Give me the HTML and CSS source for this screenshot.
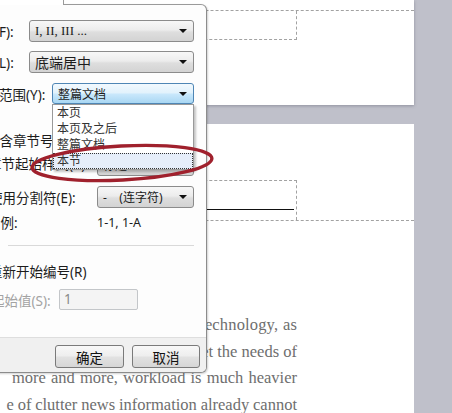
FILE: index.html
```html
<!DOCTYPE html>
<html lang="zh-CN">
<head>
<meta charset="utf-8">
<title>页码格式</title>
<link rel="stylesheet" href="styles.css">
</head>
<body>
<div class="screen">
  <div class="workspace">
    <div class="page page1">
      <div class="footer-area">
        <div class="footer-tab"></div>
      </div>
    </div>
    <div class="page page2">
      <div class="header-area">
        <div class="header-tab"><div class="header-rule"></div></div>
      </div>
      <div class="body-text">
        <div class="ln ln1">information technology, as</div>
        <div class="ln">meet the needs of</div>
        <div class="ln ln3">more and more, workload is much heavier</div>
        <div class="ln ln4">e of clutter news information already cannot</div>
      </div>
    </div>
  </div>

  <div class="dialog">
    <div class="row r1 in8"><span class="lbl">样式(F):</span><div class="combo w164"><span class="val serif">I, II, III ...</span><i class="arrow"></i></div></div>
    <div class="row r2 in8"><span class="lbl">位置(L):</span><div class="combo w164"><span class="val big">底端居中</span><i class="arrow"></i></div></div>
    <div class="row r3 in12"><span class="lbl">应用范围(Y):</span><div class="combo focus w141"><span class="val">整篇文档</span><i class="arrow"></i></div></div>
    <div class="row r4 in26"><span class="lbl">包含章节号(N)</span></div>
    <div class="row r5 in28"><span class="lbl up">章节起始样式(P):</span><div class="combo w96"><span class="val">标题 1</span><i class="arrow"></i></div></div>
    <div class="row r6 in29"><span class="lbl">使用分割符(E):</span><div class="combo w96"><span class="val pre">-    (连字符)</span><i class="arrow"></i></div></div>
    <div class="row r7 in27"><span class="lbl">示例:</span><span class="sample">1-1, 1-A</span></div>
    <div class="sep"></div>
    <div class="row r8 in29"><span class="lbl">重新开始编号(R)</span></div>
    <div class="row r9 in31"><span class="lbl dis w68">起始值(S):</span><div class="input">1</div></div>
    <div class="buttons"><button class="btn ok">确定</button><button class="btn cancel">取消</button></div>
  </div>

  <ul class="dropdown">
    <li>本页</li>
    <li>本页及之后</li>
    <li>整篇文档</li>
    <li class="sel">本节</li>
  </ul>

  <svg class="annot" width="232" height="70" viewBox="0 0 232 70">
    <ellipse cx="122" cy="33" rx="90" ry="17" transform="rotate(-3 122 33)" fill="none" stroke="#a0212d" stroke-width="3.4"/>
  </svg>
</div>
</body>
</html>
```

FILE: styles.css
```css
html, body {
  margin: 0;
  padding: 0;
}
body {
  width: 452px;
  height: 413px;
  overflow: hidden;
}
.screen {
  position: relative;
  width: 452px;
  height: 413px;
  overflow: hidden;
  background: #bfc0ca;
}
.workspace {
  display: flex;
  flex-direction: column;
  width: 452px;
  height: 413px;
}
.page {
  width: 414px;
  background: #fff;
}
.page1 {
  height: 105px;
  flex: none;
  box-shadow: 0 1px 3px rgba(60, 60, 80, 0.35);
  padding-top: 10px;
  box-sizing: border-box;
}
.page2 {
  margin-top: 19px;
  flex: 1;
}
.footer-area {
  border-top: 1px dashed #a2a2a2;
}
.footer-tab {
  width: 297px;
  height: 29px;
  box-sizing: border-box;
  border-right: 1px dashed #a2a2a2;
  border-bottom: 1px dashed #a2a2a2;
}
.header-area {
  padding-top: 56px;
  border-bottom: 1px dashed #a2a2a2;
}
.header-tab {
  width: 297px;
  height: 40px;
  box-sizing: border-box;
  border-top: 1px dashed #a2a2a2;
  border-right: 1px dashed #a2a2a2;
  padding-top: 28px;
}
.header-rule {
  width: 294px;
  height: 1px;
  background: #111;
}
.body-text {
  margin-top: 91px;
  width: 297px;
  font-family: "Liberation Serif", serif;
  font-size: 16.5px;
  line-height: 26.7px;
  color: #6e6e6e;
}
.ln {
  text-align: right;
  white-space: nowrap;
}
.ln1 { word-spacing: 0.5px; letter-spacing: 0.15px; }
.ln3 { word-spacing: 1px; }
.ln4 { word-spacing: -0.3px; }

/* dialog */
.dialog {
  position: absolute;
  left: -40px;
  top: 4px;
  width: 247px;
  height: 369px;
  box-sizing: border-box;
  background: #fdfdfd;
  border-top: 1px solid #9a9a9a;
  border-right: 1px solid #8c8c8c;
  border-bottom: 1px solid #8c8c8c;
  border-radius: 0 6px 6px 0;
  box-shadow: 1px 1px 2px rgba(0, 0, 0, 0.18);
  display: flex;
  flex-direction: column;
  font-family: "Noto Sans", "Noto Sans CJK SC", sans-serif;
  font-size: 13.5px;
  color: #1c1c1c;
}
.dialog::before {
  content: "";
  position: absolute;
  left: 0;
  top: -5px;
  width: 103px;
  height: 5px;
  background: #fff;
  border-right: 1px solid #9a9a9a;
}
.row {
  display: flex;
  align-items: center;
  height: 22px;
  padding-left: 15px;
  padding-right: 12px;
  flex: none;
  white-space: nowrap;
}
.r1 { margin-top: 15px; }
.r2 { margin-top: 9px; }
.r3 { margin-top: 10px; height: 21px; }
.r4 { margin-top: 25px; }
.r5 { margin-top: 3px; }
.r6 { margin-top: 10px; }
.r7 { margin-top: 3px; }
.r8 { margin-top: 14px; }
.r9 { margin-top: 7px; height: 21px; }
.in8 { padding-left: 8px; }
.in12 { padding-left: 12px; }
.in26 { padding-left: 26px; }
.in27 { padding-left: 27px; }
.in28 { padding-left: 28px; }
.in29 { padding-left: 29px; }
.in31 { padding-left: 31px; }
.lbl { flex: none; }
.up { margin-bottom: 4px; }
.dis { color: #a3a3a3; }
.w68 { width: 68px; }
.combo {
  margin-left: auto;
  height: 100%;
  box-sizing: border-box;
  display: flex;
  align-items: center;
  padding-left: 5px;
  border: 1px solid #8b8b8b;
  border-radius: 3px;
  background: linear-gradient(#f7f7f7, #ececec 45%, #dedede 55%, #d3d3d3);
  font-size: 12px;
}
.combo.focus {
  border-color: #4f86b5;
  background: linear-gradient(#f2f9fe, #e2f2fc 45%, #c8e7fb 55%, #a9d7f3);
  font-size: 12px;
}
.w164 { width: 165px; }
.w141 { width: 142px; }
.w96 { width: 97px; }
.val { flex: none; }
.big { font-size: 14px; }
.serif {
  font-family: "Liberation Serif", serif;
  font-size: 13px;
}
.pre { white-space: pre; }
.arrow {
  margin-left: auto;
  margin-right: 6px;
  width: 0;
  height: 0;
  border-left: 4px solid transparent;
  border-right: 4px solid transparent;
  border-top: 4px solid #111;
}
.sample {
  margin-left: auto;
  width: 97px;
  font-size: 12.5px;
}
.sep {
  flex: none;
  margin-top: 12px;
  margin-left: 48px;
  margin-right: 12px;
  height: 1px;
  background: #d9d9d9;
}
.input {
  width: 79px;
  height: 21px;
  box-sizing: border-box;
  border: 1px solid #c3c6c9;
  border-radius: 2px;
  background: #f4f4f4;
  color: #8a8a8a;
  padding-left: 4px;
  font-size: 13.5px;
  line-height: 19px;
}
.buttons {
  margin-top: auto;
  flex: none;
  height: 35px;
  box-sizing: border-box;
  border-top: 1px solid #dedede;
  background: #f0f0f0;
  border-radius: 0 0 5px 0;
  display: flex;
  justify-content: flex-end;
  align-items: flex-start;
  gap: 8px;
  padding-top: 7px;
  padding-right: 6px;
}
.btn {
  height: 23px;
  padding: 0;
  border: 1px solid #7a7a7a;
  border-radius: 3px;
  background: linear-gradient(#f8f8f8, #eeeeee 48%, #e2e2e2 52%, #d6d6d6);
  font-family: "Noto Sans", "Noto Sans CJK SC", sans-serif;
  font-size: 13.5px;
  color: #111;
}
.ok { width: 69px; }
.cancel { width: 68px; }

/* open list */
.dropdown {
  position: absolute;
  left: 52px;
  top: 104px;
  width: 142px;
  margin: 0;
  padding: 0;
  list-style: none;
  box-sizing: border-box;
  background: #fff;
  border: 1px solid #9a9a9a;
  box-shadow: 2px 2px 2px rgba(0, 0, 0, 0.22);
  font-family: "Noto Sans", "Noto Sans CJK SC", sans-serif;
  font-size: 12px;
  color: #333;
}
.dropdown li {
  height: 16px;
  line-height: 16px;
  padding-left: 4px;
  box-sizing: border-box;
  white-space: nowrap;
}
.dropdown li.sel {
  background: #e6eefa;
  outline: 1px dotted #333;
  outline-offset: -1px;
}
.annot {
  position: absolute;
  left: 0;
  top: 130px;
}
```
